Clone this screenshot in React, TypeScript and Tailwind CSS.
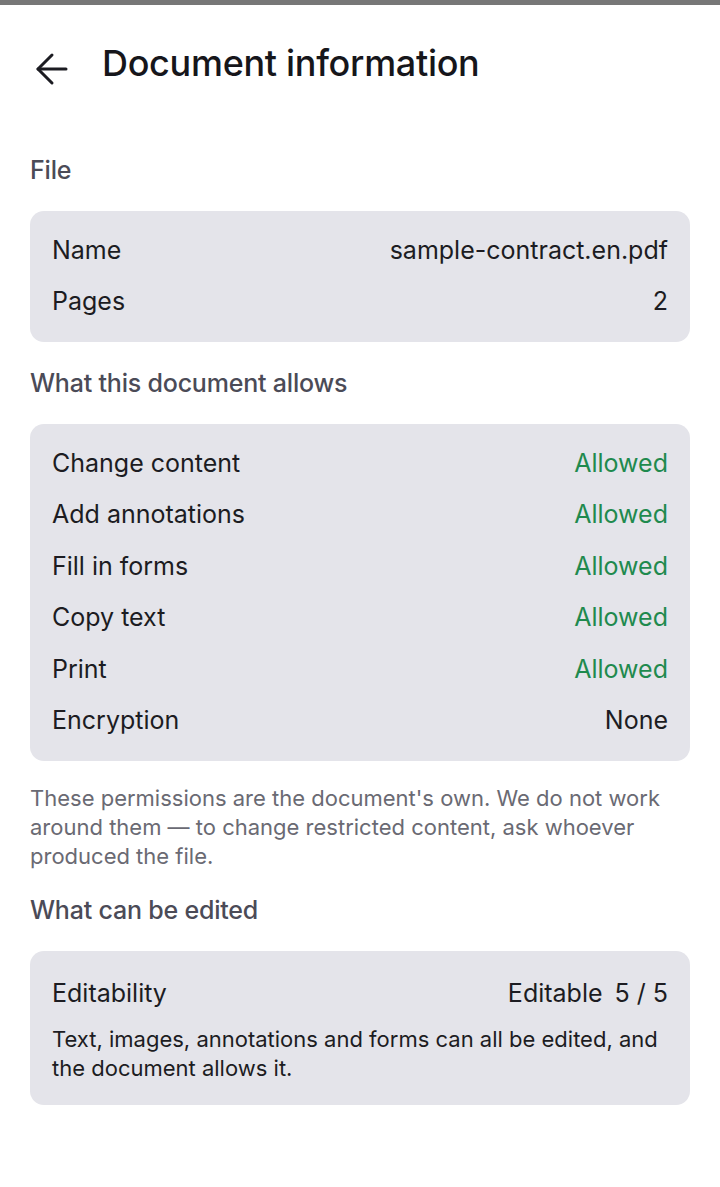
import { ArrowLeft } from "lucide-react";

type Row = { label: string; value: string; ok?: boolean };

const fileRows: Row[] = [
  { label: "Name", value: "sample-contract.en.pdf" },
  { label: "Pages", value: "2" },
];

const permRows: Row[] = [
  { label: "Change content", value: "Allowed", ok: true },
  { label: "Add annotations", value: "Allowed", ok: true },
  { label: "Fill in forms", value: "Allowed", ok: true },
  { label: "Copy text", value: "Allowed", ok: true },
  { label: "Print", value: "Allowed", ok: true },
  { label: "Encryption", value: "None" },
];

function SectionTitle({ children }: { children: React.ReactNode }) {
  return (
    <h2 className="text-[25px] font-medium leading-[32px] tracking-[-0.2px] text-[#4b4b57]">
      {children}
    </h2>
  );
}

function InfoRow({ row }: { row: Row }) {
  return (
    <div className="flex h-[51.5px] items-center justify-between">
      <span>{row.label}</span>
      <span className={row.ok ? "text-[#1f8a4e]" : ""}>{row.value}</span>
    </div>
  );
}

export default function App() {
  return (
    <div
      className="min-h-[1187px] bg-white text-[#1c1c22]"
      style={{ fontFamily: "Inter, 'Noto Sans', sans-serif" }}
    >
      <div className="h-[5px] bg-[#777777]" />

      <header className="mt-[36px] flex items-start gap-[26px] pl-[28px]">
        <button className="mt-[3.5px] text-[#1c1c22]">
          <ArrowLeft size={48} strokeWidth={1.5} />
        </button>
        <h1 className="text-[36px] font-medium leading-[44px] tracking-[-0.3px] text-[#16161b]">
          Document information
        </h1>
      </header>

      <main className="px-[30px] pt-[61px]">
        <SectionTitle>File</SectionTitle>
        <div className="mt-[25px] rounded-[14px] bg-[#e4e4ea] px-[22px] py-[14px] text-[25px]">
          {fileRows.map((r) => (
            <InfoRow key={r.label} row={r} />
          ))}
        </div>

        <div className="mt-[25px]">
          <SectionTitle>What this document allows</SectionTitle>
        </div>
        <div className="mt-[25px] rounded-[14px] bg-[#e4e4ea] px-[22px] py-[14px] text-[25px]">
          {permRows.map((r) => (
            <InfoRow key={r.label} row={r} />
          ))}
        </div>

        <p className="mt-[23px] pr-[10px] text-[22px] leading-[29px] text-[#6a6a73]">
          These permissions are the document's own. We do not work around them — to change
          restricted content, ask whoever produced the file.
        </p>

        <div className="mt-[23px]">
          <SectionTitle>What can be edited</SectionTitle>
        </div>
        <div className="mt-[25px] rounded-[14px] bg-[#e4e4ea] px-[22px] pt-[17px] pb-[21.5px] text-[25px]">
          <div className="flex h-[51.5px] items-center justify-between">
            <span>Editability</span>
            <span className="flex gap-[12px]">
              <span>Editable</span>
              <span>5 / 5</span>
            </span>
          </div>
          <p className="mt-[6px] text-[22px] leading-[29px]">
            Text, images, annotations and forms can all be edited, and the document allows it.
          </p>
        </div>
      </main>
    </div>
  );
}
